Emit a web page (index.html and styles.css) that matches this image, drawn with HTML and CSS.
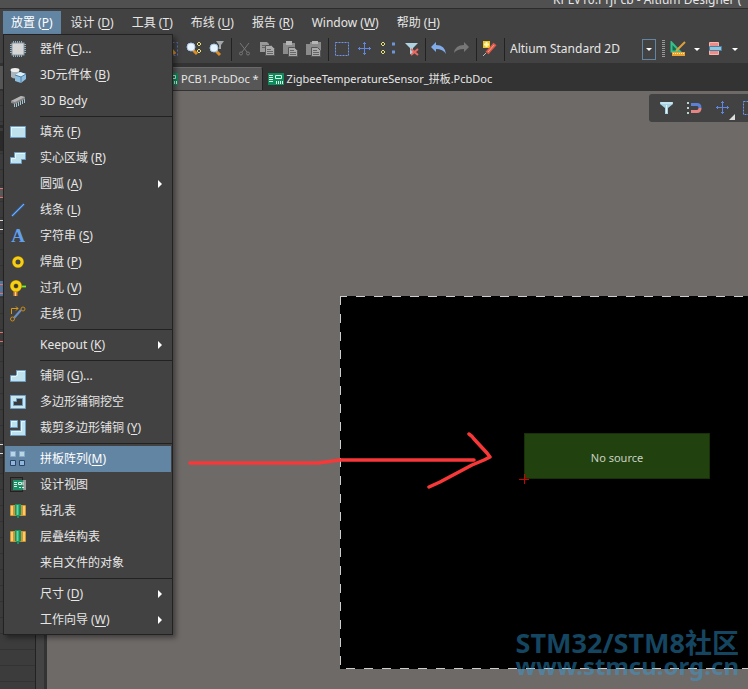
FILE: index.html
```html
<!doctype html>
<html lang="zh-CN">
	<head>
		<meta charset="UTF-8">
		<title>Altium Designer</title>
		<link rel="stylesheet" href="styles.css">
	</head>

	<body>
		<header class="titlebar"><span class="title">KPLV10.PrjPcb - Altium Designer (</span></header>

		<!--主菜单-->
		<nav class="menubar">
			<button class="on">放置 (<u>P</u>)</button>
			<button>设计 (<u>D</u>)</button>
			<button>工具 (<u>T</u>)</button>
			<button>布线 (<u>U</u>)</button>
			<button>报告 (<u>R</u>)</button>
			<button>Window (<u>W</u>)</button>
			<button>帮助 (<u>H</u>)</button>

			<!--放置 下拉菜单-->
			<div class="menu">
				<button><svg class="ico" viewBox="0 0 16 16"><path d="M3.500 0v16M5.500 0v16M7.500 0v16M9.500 0v16M11.500 0v16M0 3.500h16M0 5.500h16M0 7.500h16M0 9.500h16M0 11.500h16" stroke="#8fb0c4"/><rect x="2" y="2" width="12" height="12" fill="#d6d6d6" stroke="#8a9aa4"/></svg>器件 (<u>C</u>)...</button>
				<button><svg class="ico" viewBox="0 0 16 16"><path d="M1 3v7q4 3 8 0V3z" fill="#a9b4bb"/><ellipse cx="5" cy="3" rx="4.500" ry="2" fill="#eee"/><path d="M5 8l5-3 6 2v5l-5 4-6-2z" fill="#8fbfe0"/><path d="M5 8l5-3 6 2-5 3z" fill="#d9effa"/><path d="M11 10v6M5 8l6 2 5-3" stroke="#4d7da5" fill="none"/></svg>3D元件体 (<u>B</u>)</button>
				<button><svg class="ico" viewBox="0 0 16 16"><path d="M6.500 9v5M8.500 8v5M10.500 7v5M12.500 6v5M14.500 5v5M4.500 10v4" stroke="#9fc3d2"/><path d="M1 8l10-5 4 1v2L5 11l-4-1z" fill="#858585"/><path d="M1 8l10-5 4 1-10 5z" fill="#b5b5b5"/></svg>3D B<u>o</u>dy</button>
				<hr>
				<button><svg class="ico" viewBox="0 0 16 16"><path d="M.5 2.500h15v11H.5z" fill="#bfe2ec" stroke="#6d9cc4"/><path d="M1.500 12V3.500H15" fill="none" stroke="#e4f6fa"/></svg>填充 (<u>F</u>)</button>
				<button><svg class="ico" viewBox="0 0 16 16"><path d="M.5 7.500h4v-5h11v7h-4v4H.5z" fill="#bfe2ec" stroke="#6d9cc4"/><path d="M1.500 12V8.500h4v-5H15" fill="none" stroke="#e4f6fa"/></svg>实心区域 (<u>R</u>)</button>
				<button class="sub"><span class="ico"></span>圆弧 (<u>A</u>)</button>
				<button><svg class="ico" viewBox="0 0 16 16"><path d="M2 14L14 2" stroke="#3d76c4" stroke-width="2.400"/><path d="M2 14L14 2" stroke="#77adf0"/></svg>线条 (<u>L</u>)</button>
				<button><span class="ico letter">A</span>字符串 (<u>S</u>)</button>
				<button><svg class="ico" viewBox="0 0 16 16"><circle cx="8" cy="8" r="4" fill="#444" stroke="#a87900" stroke-width="4"/><circle cx="8" cy="8" r="4" fill="#444" stroke="#f4cf16" stroke-width="3"/></svg>焊盘 (<u>P</u>)</button>
				<button><svg class="ico" viewBox="0 0 16 16"><path d="M5.500 9v7" stroke="#d9842c" stroke-width="4"/><path d="M5.500 9v7" stroke="#ffd190"/><path d="M9 6.500h7" stroke="#3f9612" stroke-width="3"/><path d="M9 6.500h7" stroke="#8fdc48"/><circle cx="6" cy="6" r="4" fill="#333" stroke="#b88a00" stroke-width="4"/><circle cx="6" cy="6" r="4" fill="none" stroke="#f4d016" stroke-width="3"/></svg>过孔 (<u>V</u>)</button>
				<button><svg class="ico" viewBox="0 0 16 16"><path d="M4 12l7-8" stroke="#6b8ec4" stroke-width="2"/><path d="M1.500 8V2.500H8M6 .5l2 2-2 2" fill="none" stroke="#d99a16"/><circle cx="13" cy="3" r="2" fill="#444" stroke="#c98a16"/><circle cx="2.500" cy="13" r="2" fill="#444" stroke="#c98a16"/></svg>走线 (<u>T</u>)</button>
				<hr>
				<button class="sub"><span class="ico"></span>Keepout (<u>K</u>)</button>
				<hr>
				<button><svg class="ico" viewBox="0 0 16 16"><path d="M.5 7.500h5l1-1v-4h9v11H.5z" fill="#bfe2ec" stroke="#6d9cc4"/><path d="M1.500 12V8.500H6l1.500-1.500V3.500H15" fill="none" stroke="#e4f6fa"/></svg>铺铜 (<u>G</u>)...</button>
				<button><svg class="ico" viewBox="0 0 16 16"><path d="M.5 1.500h15v13H.5z" fill="#c8e6ee" stroke="#6d9cc4"/><path d="M3.500 7.500h3v-3h6v7h-9z" fill="#3a3a3a" stroke="#6d9cc4"/></svg>多边形铺铜挖空</button>
				<button><svg class="ico" viewBox="0 0 16 16"><path d="M.5.5h7v7h-7zM.5 10.500h10V.5h5v15H.5z" fill="#bfe2ec" stroke="#6d9cc4"/><path d="M1.500 7V1.500H7M1.500 15v-3.500h10V1.500H15" fill="none" stroke="#e4f6fa"/></svg>裁剪多边形铺铜 (<u>Y</u>)</button>
				<hr>
				<button class="on"><svg class="ico" viewBox="0 0 16 16"><path d="M.5.5h5v5h-5zM9.500.5h5v5h-5z" fill="#b9d6e4" stroke="#86a9cc"/><path d="M.5 9.500h5v5h-5zM9.500 9.500h5v5h-5z" fill="#8fb6dc" stroke="#2d4468"/></svg>拼板阵列(<u>M</u>)</button>
				<button><svg class="ico" viewBox="0 0 16 16"><path d="M.5.5h12v14H.5z" fill="none" stroke="#000" stroke-dasharray="1 1"/><path d="M3 3h10v10H3z" fill="#169468"/><path d="M13 3h3v10h-3z" fill="#999"/><path d="M4 5.500h3M4 7.500h3M4 9.500h3M8.500 5.500h3v2h-3zM13 5v3M9 10.500h2M12 10.500h2" stroke="#dfeee6" fill="none"/></svg>设计视图</button>
				<button><svg class="ico" viewBox="0 0 16 16"><rect y="2" width="16" height="11" rx="1" fill="#d2952c"/><path d="M2 3v9M14 3v9" stroke="#f4cb78" stroke-width="2"/><path d="M5 1h6v11l-2 1v2H7v-2l-2-1z" fill="#129464"/><path d="M7.500 2v10" stroke="#67d3a2" stroke-width="2"/></svg>钻孔表</button>
				<button><svg class="ico" viewBox="0 0 16 16"><rect y="2" width="16" height="11" rx="1" fill="#d2952c"/><path d="M2 3v9M14 3v9" stroke="#f4cb78" stroke-width="2"/><path d="M5 1h6v11l-2 1v2H7v-2l-2-1z" fill="#129464"/><path d="M7.500 2v10" stroke="#67d3a2" stroke-width="2"/></svg>层叠结构表</button>
				<button><span class="ico"></span>来自文件的对象</button>
				<hr>
				<button class="sub"><span class="ico"></span>尺寸 (<u>D</u>)</button>
				<button class="sub"><span class="ico"></span>工作向导 (<u>W</u>)</button>
			</div>
		</nav>

		<!--工具栏-->
		<div class="toolbar">
			<div class="group">
				<button aria-label="缩放区域"><svg viewBox="0 0 16 16"><path d="M1.500 1.500h13v13h-13z" fill="none" stroke="#5d74b8" stroke-dasharray="2 2"/><path d="M8 8l4 5" stroke="#d9902c" stroke-width="3"/></svg></button>
				<button aria-label="缩放对象"><svg viewBox="0 0 16 16"><path d="M7 9l4 4" stroke="#d98c28" stroke-width="3"/><circle cx="5" cy="6" r="4" fill="#e8f5ff" stroke="#a8c8e6"/><path d="M13 1l2 2-2 2-2-2zM13 8l2 2-2 2-2-2z" fill="none" stroke="#e5df70"/></svg></button>
				<button aria-label="缩放过滤"><svg viewBox="0 0 16 16"><path d="M7 10l4 4" stroke="#d98c28" stroke-width="3"/><circle cx="5" cy="7" r="4" fill="#e8f5ff" stroke="#a8c8e6"/><path d="M7 0h8l-3 4v4h-2V4z" fill="#a3a8ab"/></svg></button>
			</div>
			<i class="sep"></i>
			<div class="group">
				<button aria-label="剪切"><svg viewBox="0 0 16 16"><path d="M3 2l7 9M12 2L5 11" stroke="#777"/><circle cx="4" cy="12.500" r="1.500" fill="none" stroke="#777"/><circle cx="11" cy="12.500" r="1.500" fill="none" stroke="#777"/></svg></button>
				<button aria-label="复制"><svg viewBox="0 0 16 16"><path d="M0 1h7l2 2v8H0z" fill="#999"/><path d="M5.500 4.500h6l3 3v7h-9z" fill="#aaa" stroke="#555"/><path d="M7 8.500h4M7 10.500h6M7 12.500h6M2 4.500h3M2 6.500h3" stroke="#666"/></svg></button>
				<button aria-label="粘贴"><svg viewBox="0 0 16 16"><path d="M0 2h12v11H0z" fill="#8b8b8b"/><path d="M3 0h6v4H3z" fill="#b5b5b5"/><path d="M5.500 6.500h6l3 3v6h-9z" fill="#aaa" stroke="#555"/><path d="M7 9.500h4M7 11.500h6M7 13.500h6" stroke="#666"/></svg></button>
				<button aria-label="智能粘贴"><svg viewBox="0 0 16 16"><path d="M0 3h12v11H0zM4 1h11v12H4z" fill="#8b8b8b"/><path d="M6 0h6v3H6z" fill="#b5b5b5"/><path d="M5.500 6.500h6l3 3v6h-9z" fill="#aaa" stroke="#555"/><path d="M7 9.500h4M7 11.500h6M7 13.500h6" stroke="#666"/></svg></button>
			</div>
			<i class="sep"></i>
			<div class="group">
				<button aria-label="选择"><svg viewBox="0 0 16 16"><path d="M1.500 1.500h13v13h-13z" fill="none" stroke="#6f96ee" stroke-dasharray="2 1"/></svg></button>
				<button aria-label="移动"><svg viewBox="0 0 16 16"><path d="M1 7.500h13M7.500 1v13M6 2.500h3M6 12.500h3M2.500 6v3M12.500 6v3" stroke="#6286dc"/></svg></button>
				<button aria-label="取消选择"><svg viewBox="0 0 16 16"><path d="M5 4l6 7M5 11l6-7" stroke="#394258"/><path d="M3 1l2 2-2 2-2-2zM3 9l2 2-2 2-2-2z" fill="none" stroke="#e5df70"/><path d="M12 3h3M12 11h3" stroke="#6c96dc" stroke-width="3"/></svg></button>
				<button aria-label="清除过滤"><svg viewBox="0 0 16 16"><path d="M2 2h13l-5 5v6H7V7z" fill="#afd3e0"/><path d="M8 8l7 6M15 8l-7 6" stroke="#e86a62" stroke-width="2"/></svg></button>
			</div>
			<i class="sep"></i>
			<div class="group">
				<button aria-label="撤销"><svg viewBox="0 0 16 16"><path d="M0 6l5-5v3q9 0 10 9-3-5-10-5v3z" fill="#80aceb"/></svg></button>
				<button aria-label="重做"><svg viewBox="0 0 16 16"><path d="M15 6l-5-5v3Q1 4 0 12q3-4 10-4v3z" fill="#777"/></svg></button>
			</div>
			<i class="sep"></i>
			<div class="group">
				<button aria-label="交叉探测"><svg viewBox="0 0 16 16"><path d="M1 0h7v7H1z" fill="#ecc526"/><path d="M4.500 1v5M2 3.500h5" stroke="#fff8b0" stroke-width="2"/><path d="M13 3L5 12" stroke="#df5a49" stroke-width="4"/><path d="M12 4l-6 7" stroke="#f3a08b"/><path d="M4 12l-3 3" stroke="#bbb"/></svg></button>
			</div>
			<i class="sep"></i>
			<div class="combo">
				<select aria-label="视图配置"><option>Altium Standard 2D</option></select>
				<span class="drop"><i class="caret"></i></span>
			</div>
			<i class="grip"></i>
			<button aria-label="应用工具"><svg viewBox="0 0 16 16"><path d="M1.500 1.500v9H10z" fill="#176b4c" stroke="#33c08b" stroke-width="2"/><path d="M15 1L6 10" stroke="#dfa03b" stroke-width="2"/><path d="M2 11h13v4H2z" fill="#e9a22f"/><path d="M3.500 12v1M5.500 12v1M7.500 12v1M9.500 12v1M11.500 12v1M13.500 12v1" stroke="#fff0bd"/></svg></button>
			<i class="caret"></i>
			<button aria-label="对齐"><svg viewBox="0 0 16 16"><path d="M1.500 1.500h9v12h-9z" fill="#ee8c88" stroke="#f7b5b0"/><path d="M1.500 5.500h12v4h-12z" fill="#8fc5df" stroke="#4b7f9e"/></svg></button>
			<i class="caret"></i>
			<button aria-label="查找"><svg viewBox="0 0 16 16"><circle cx="6" cy="8" r="4" fill="#b9d2df"/></svg></button>
		</div>

		<!--文档标签-->
		<div class="tabs">
			<button class="on"><svg class="doc" viewBox="0 0 16 12"><path d="M0 0h16v12H0z" fill="#0f8a5c"/><path d="M1 2.500h4M1 4.500h4M1 6.500h4M1 8.500h4M7.500 2.500h6v3h-6zM8.500 8v3M10.500 8v3M12.500 8v3M14.500 8v3" stroke="#d9f0e5" fill="none"/></svg>PCB1.PcbDoc *</button>
			<button><svg class="doc" viewBox="0 0 16 12"><path d="M0 0h16v12H0z" fill="#0f8a5c"/><path d="M1 2.500h4M1 4.500h4M1 6.500h4M1 8.500h4M7.500 2.500h6v3h-6zM8.500 8v3M10.500 8v3M12.500 8v3M14.500 8v3" stroke="#d9f0e5" fill="none"/></svg>ZigbeeTemperatureSensor_拼板.PcbDoc</button>
		</div>

		<div class="content">
			<aside class="side">
				<!--列表边缘的分隔线-->
				<svg class="edge" viewBox="0 0 3 400" width="3" height="400"><path d="M0 34h3v3H0zM0 40h3v20H0z" fill="#2b2b2b"/><path d="M0 97h3v9H0z" fill="#5a5a5a"/><path d="M0 190h3v15H0z" fill="#55759a"/><path d="M0 97.500h3M0 106.500h3M0 193.500h3M0 202.500h3M0 241.500h3M0 250.500h3" stroke="#e8716d"/><path d="M0 129.500h3M0 138.500h3M0 353.500h3M0 362.500h3" stroke="#ddd"/></svg>
			</aside>
			<main class="canvas">
				<div class="board"></div>
				<div class="panel-array">No source</div>
				<svg class="origin" viewBox="0 0 10 10"><path d="M0 5.500h10M5.500 0v10" stroke="#d40000"/></svg>
				<svg class="arrow" viewBox="0 0 310 60"><path d="M4 33h128l22-3h134M283 4q3 2 5 5l13 14 3 4-6 3-12 5-32 17-11 5" fill="none" stroke="#f83838" stroke-width="3.500" stroke-linecap="round" stroke-linejoin="round"/></svg>
				<div class="floatbar">
					<button aria-label="过滤器"><svg viewBox="0 0 16 16"><path d="M2 2h13v2l-5 4v6H7V8L2 4z" fill="#a9d3e3"/><path d="M3 3h11M8.500 5v8" stroke="#e2f5fa"/></svg></button>
					<button aria-label="捕捉"><svg viewBox="0 0 16 16"><path d="M1 3h2M1 8h2M1 13h2" stroke="#b9d5cf" stroke-width="2"/><path d="M5 4.500h6q3 0 3 3.500" fill="none" stroke="#5b80d6" stroke-width="3"/><path d="M5 11.500h6q3 0 3-3.500" fill="none" stroke="#e58585" stroke-width="3"/></svg></button>
					<button class="more" aria-label="移动"><svg viewBox="0 0 16 16"><path d="M2 7.500h13M8.500 1v13M7 2.500h3M7 12.500h3M3.500 6v3M13.500 6v3" stroke="#6286dc"/></svg></button>
					<button aria-label="选择"><svg viewBox="0 0 16 16"><path d="M1.500 1.500h13v13h-13z" fill="none" stroke="#6f96ee" stroke-dasharray="2 1"/></svg></button>
				</div>
				<div class="watermark">
					<p class="name">STM32/STM8社区</p>
					<p class="site">www.stmcu.org.cn</p>
				</div>
			</main>
		</div>
	</body>

</html>
```
FILE: styles.css
```css
* {
	margin: 0;
	padding: 0;
	box-sizing: border-box;
}

body {
	display: flex;
	flex-direction: column;
	height: 100vh;
	overflow: hidden;
	background: #424242;
	color: #e6e6e6;
	font: 12px/16px "Noto Sans", "Noto Sans CJK SC", sans-serif;
}

button,
select {
	border: 0;
	background: none;
	color: inherit;
	font: inherit;
	white-space: nowrap;
}

svg {
	display: block;
}

u {
	text-underline-offset: 2px;
}

.titlebar {
	display: flex;
	align-items: flex-end;
	justify-content: flex-end;
	height: 9px;
	flex: none;
	overflow: hidden;
	background: #505050;
	border-bottom: 1px solid #2c2c2c;
}

.title {
	flex: none;
	width: 195px;
	white-space: nowrap;
}

/*主菜单*/
.menubar {
	position: relative;
	display: flex;
	gap: 2px;
	flex: none;
	height: 26px;
	padding: 2px 3px 1px;
	z-index: 5;
}

.menubar > button {
	padding: 0 8px;
}

.menubar .on {
	background: #6385a4;
	color: #fff;
}

.menu {
	position: absolute;
	left: 3px;
	top: 25px;
	width: 170px;
	padding: 1px;
	background: #424242;
	border: 1px solid #222;
	box-shadow: 3px 3px 5px rgba(0, 0, 0, .4);
}

.menu button {
	display: flex;
	align-items: center;
	width: 100%;
	height: 26px;
	padding-left: 5px;
	white-space: pre;
}

.menu .ico {
	flex: none;
	width: 16px;
	height: 16px;
	margin-right: 14px;
}

.menu .letter {
	color: #62a0ee;
	font: bold 19px/16px "Liberation Serif", serif;
	text-align: center;
}

.menu hr {
	height: 1px;
	margin: 2px -1px 2px 35px;
	border: 0;
	background: #222;
}

.menu .sub:after {
	content: "";
	margin: 0 9px 0 auto;
	border: 4px solid transparent;
	border-left-color: #fff;
	border-right: 0;
}

/*工具栏*/
.toolbar {
	display: flex;
	align-items: center;
	flex: none;
	height: 28px;
	padding-left: 163px;
	overflow: hidden;
}

.toolbar button {
	flex: none;
}

.toolbar svg,
.floatbar svg {
	width: 16px;
	height: 16px;
}

.group {
	display: flex;
	flex: none;
	gap: 7px;
}

.sep {
	flex: none;
	width: 1px;
	height: 23px;
	margin: 0 5px 0 6px;
	background: #222;
}

.combo {
	position: relative;
	flex: none;
	width: 146px;
}

.combo select {
	display: block;
	width: 100%;
	height: 21px;
	appearance: none;
}

.drop {
	position: absolute;
	top: 0;
	right: 0;
	width: 14px;
	height: 21px;
	padding: 8px 3px;
	border: 1px solid #6385a4;
	pointer-events: none;
}

.caret {
	display: block;
	flex: none;
	width: 6px;
	border: 3px solid transparent;
	border-top-color: #fff;
	border-bottom: 0;
}

.toolbar > .caret {
	margin: 0 8px;
}

.grip {
	flex: none;
	width: 3px;
	height: 18px;
	margin: 0 5px 0 6px;
	background: repeating-linear-gradient(#999 0 1px, #424242 1px 2px);
}

/*文档标签*/
.tabs {
	display: flex;
	gap: 2px;
	flex: none;
	height: 28px;
	padding: 4px 0 1px 158px;
	background: linear-gradient(#575757, #575757) 0 3px / 3px 23px no-repeat #333;
	font-size: 11px;
}

.tabs button {
	display: flex;
	align-items: center;
	padding: 0 3px;
}

.tabs .on {
	background: #575757;
	border: 1px solid #6a6a6a;
	border-right-color: #222;
	border-bottom: 0;
	border-radius: 2px 3px 0 0;
}

.doc {
	width: 16px;
	height: 12px;
	margin-right: 3px;
}

.content {
	display: flex;
	flex: 1;
	min-height: 0;
}

.side {
	width: 47px;
	flex: none;
	background: linear-gradient(#222, #222) 35px 0 / 1px 100% no-repeat, linear-gradient(#333, #333) 44px 0 / 3px 100% no-repeat, linear-gradient(#444, #444) 36px 0 / 8px 100% no-repeat, repeating-linear-gradient(#3c3c3c 0 14px, #333 14px 15px, #3c3c3c 15px 16px);
}

/*PCB画布*/
.canvas {
	position: relative;
	flex: 1;
	overflow: hidden;
	background: #6e6a68;
}

.board {
	position: absolute;
	top: 205px;
	right: 0;
	bottom: 20px;
	left: 293px;
	background: repeating-linear-gradient(90deg, #ccc 0 7px, #000 7px 16px, #ccc 16px 18px) 0 0 / 100% 1px no-repeat, repeating-linear-gradient(90deg, #000 0 6px, #ccc 6px 15px, #000 15px 18px) 0 100% / 100% 1px no-repeat, repeating-linear-gradient(#ccc 0 9px, #000 9px 18px) 0 0 / 1px 100% no-repeat, #000;
}

.panel-array {
	position: absolute;
	left: 477px;
	top: 342px;
	width: 186px;
	height: 46px;
	background: #21420e;
	border: 1px solid #182f0a;
	color: #c9d0c5;
	font: 11px/48px "Noto Sans", sans-serif;
	text-align: center;
}

.origin {
	position: absolute;
	left: 472px;
	top: 383px;
	width: 10px;
	height: 10px;
}

.arrow {
	position: absolute;
	left: 139px;
	top: 339px;
	width: 310px;
	height: 60px;
}

.floatbar {
	position: absolute;
	left: 602px;
	top: 3px;
	display: flex;
	gap: 12px;
	padding: 6px 9px;
	background: #424242;
	border-radius: 3px 0 0 3px;
}

.floatbar .more {
	position: relative;
}

.more:after {
	content: "";
	position: absolute;
	right: -5px;
	bottom: -4px;
	border: 3px solid #ddd;
	border-top-color: transparent;
	border-left-color: transparent;
}

.watermark {
	position: absolute;
	right: 9px;
	bottom: 12px;
	color: rgba(50, 160, 222, .44);
	font-weight: bold;
	text-align: center;
	white-space: nowrap;
}

.name {
	font-size: 27px;
	line-height: 24px;
}

.site {
	font-size: 24px;
	line-height: 22px;
}
```
